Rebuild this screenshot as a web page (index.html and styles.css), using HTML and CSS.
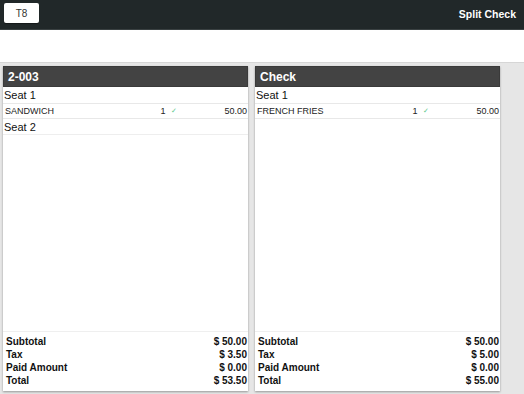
FILE: index.html
```html
<!DOCTYPE html>
<html>
<head>
<meta charset="utf-8">
<link rel="stylesheet" href="styles.css">
</head>
<body>
<div class="topbar">
  <button class="tbtn">T8</button>
  <div class="title">Split Check</div>
</div>
<div class="strip"></div>
<div class="main">
  <div class="panel">
    <div class="phead">2-003</div>
    <div class="pbody">
      <div class="seat">Seat 1</div>
      <div class="item">
        <span class="name">SANDWICH</span>
        <span class="qty">1</span>
        <span class="chk">&#10003;</span>
        <span class="price">50.00</span>
      </div>
      <div class="seat seat-b">Seat 2</div>
    </div>
    <div class="pfoot">
      <div class="trow"><span>Subtotal</span><span>$ 50.00</span></div>
      <div class="trow"><span>Tax</span><span>$ 3.50</span></div>
      <div class="trow"><span>Paid Amount</span><span>$ 0.00</span></div>
      <div class="trow"><span>Total</span><span>$ 53.50</span></div>
    </div>
  </div>
  <div class="panel">
    <div class="phead">Check</div>
    <div class="pbody">
      <div class="seat">Seat 1</div>
      <div class="item">
        <span class="name">FRENCH FRIES</span>
        <span class="qty">1</span>
        <span class="chk">&#10003;</span>
        <span class="price">50.00</span>
      </div>
    </div>
    <div class="pfoot">
      <div class="trow"><span>Subtotal</span><span>$ 50.00</span></div>
      <div class="trow"><span>Tax</span><span>$ 5.00</span></div>
      <div class="trow"><span>Paid Amount</span><span>$ 0.00</span></div>
      <div class="trow"><span>Total</span><span>$ 55.00</span></div>
    </div>
  </div>
</div>
</body>
</html>
```
FILE: styles.css
```css
* { box-sizing: border-box; }
html, body { margin: 0; padding: 0; height: 100%; }
body {
  font-family: "Liberation Sans", Arial, sans-serif;
  color: #111;
  background: #fff;
  display: flex;
  flex-direction: column;
  overflow: hidden;
}
.topbar {
  height: 30px;
  flex: none;
  background: #212829;
  border-bottom: 1px solid #3a4142;
  display: flex;
  align-items: flex-start;
  justify-content: space-between;
  padding: 3px 8px 0 4px;
}
.tbtn {
  width: 35px;
  height: 20px;
  background: #fff;
  border: none;
  border-radius: 2px;
  font-family: "Liberation Sans", Arial, sans-serif;
  font-size: 10px;
  color: #333;
  padding: 0;
  box-shadow: 0 1px 1px rgba(0,0,0,0.4);
}
.title {
  color: #fff;
  font-weight: bold;
  font-size: 10.5px;
  line-height: 22px;
}
.strip {
  height: 32px;
  flex: none;
  background: #fff;
}
.main {
  flex: 1;
  background: #e6e6e6;
  border-top: 1px solid #d6d6d6;
  display: flex;
  gap: 7px;
  padding: 3px 0 3px 3px;
}
.panel {
  width: 245px;
  background: #fff;
  display: flex;
  flex-direction: column;
  box-shadow: 0 1px 2px rgba(0,0,0,0.35);
}
.phead {
  height: 21px;
  background: #434343;
  color: #fff;
  font-weight: bold;
  font-size: 12px;
  line-height: 21px;
  padding-left: 4px;
  border: 1px solid #3a3a3a;
}
.pbody { flex: 1; }
.seat {
  height: 16px;
  font-size: 11px;
  line-height: 16px;
  padding-left: 1px;
  color: #111;
}
.seat-b { border-bottom: 1px solid #eee; }
.item {
  height: 16px;
  border-top: 1px solid #e8e8e8;
  border-bottom: 1px solid #e8e8e8;
  display: flex;
  align-items: center;
  font-size: 9px;
  color: #222;
  padding: 0 1px 0 2px;
}
.name { flex: 1; }
.qty { width: 10px; text-align: center; }
.chk { width: 14px; color: #5cc98a; font-size: 7px; padding-left: 3px; }
.price { width: 65px; text-align: right; }
.pfoot {
  border-top: 1px solid #efefef;
  padding: 3px 1px 4px 3px;
}
.trow {
  height: 13px;
  display: flex;
  justify-content: space-between;
  font-size: 10px;
  font-weight: bold;
  line-height: 13px;
  color: #111;
}
```
